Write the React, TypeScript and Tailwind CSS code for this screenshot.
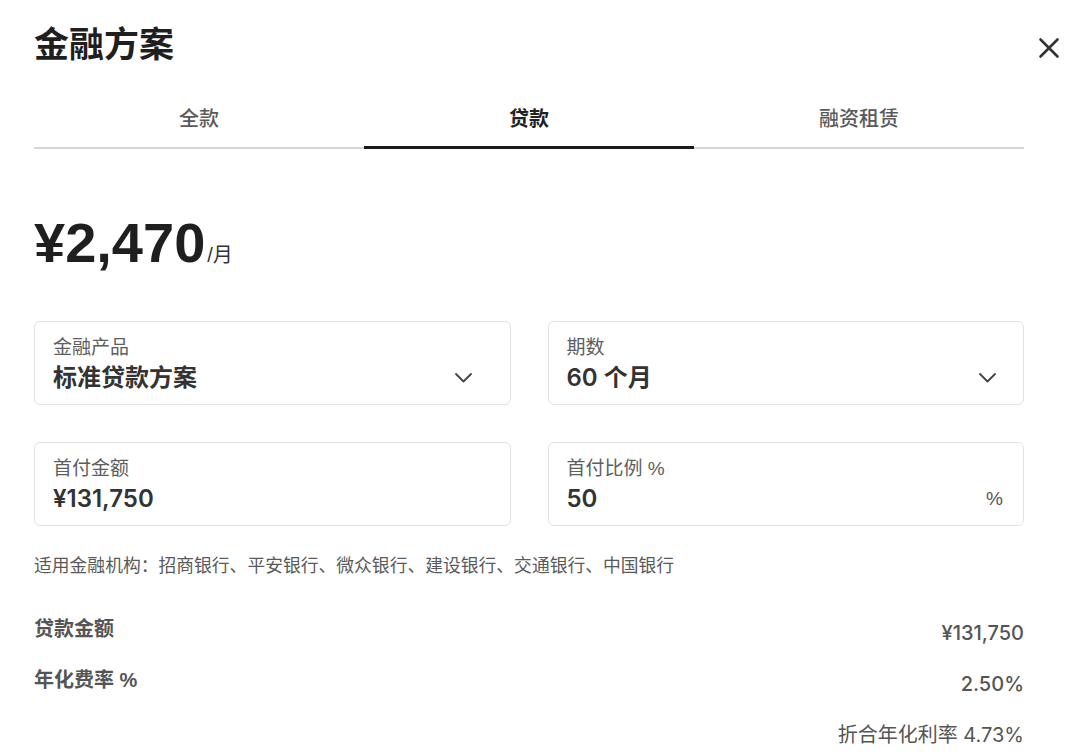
import { useState } from "react"

const tabs = ["全款", "贷款", "融资租赁"]

const num = { fontFamily: 'Inter, "Noto Sans CJK SC", sans-serif' }

function Chevron() {
  return (
    <svg width="17" height="10" viewBox="0 0 17 10" fill="none" className="shrink-0">
      <polyline points="1,1 8.5,8.5 16,1" stroke="#444" strokeWidth="1.8" strokeLinecap="round" strokeLinejoin="round" />
    </svg>
  )
}

function Field({
  label,
  value,
  right,
  pr,
}: {
  label: string
  value: string
  right?: React.ReactNode
  pr: string
}) {
  return (
    <div className={`h-[84px] rounded-[6px] border border-[#e2e2e2] pl-[18px] pt-[14px] ${pr}`}>
      <div className="text-[19px] leading-[24px] text-[#5e5e5e]">{label}</div>
      <div className="mt-[2px] flex items-center justify-between">
        <span className="text-[24px] font-semibold leading-[32px] text-[#333]" style={num}>
          {value}
        </span>
        {right}
      </div>
    </div>
  )
}

export default function App() {
  const [active, setActive] = useState(1)

  return (
    <div
      className="h-[755px] w-[1080px] overflow-hidden bg-white"
      style={{ fontFamily: '"Liberation Sans", "Noto Sans CJK SC", sans-serif' }}
    >
      <div className="flex w-[1060px] items-start justify-between pl-[34px] pt-[21px]">
        <h1 className="text-[35px] font-semibold leading-[48px] text-[#1f1f1f]">金融方案</h1>
        <button className="mt-[16px] text-[#333]" aria-label="关闭">
          <svg width="22" height="22" viewBox="0 0 22 22" fill="none">
            <path d="M2.5 2.5 L19.5 19.5 M19.5 2.5 L2.5 19.5" stroke="#333" strokeWidth="2.6" strokeLinecap="round" />
          </svg>
        </button>
      </div>

      <div className="ml-[34px] w-[990px]">
        <div className="mt-[35px] grid grid-cols-3">
          {tabs.map((t, i) => (
            <button
              key={t}
              onClick={() => setActive(i)}
              className={
                i === active
                  ? "border-b-[3px] border-[#1a1a1a] pb-[13px] pt-[1px] text-[20px] font-semibold leading-[28px] text-[#222]"
                  : "border-b-2 border-[#d6d6d6] pb-[14px] pt-[1px] text-[20px] font-medium leading-[28px] text-[#5a5a5a]"
              }
            >
              {t}
            </button>
          ))}
        </div>

        <div className="mt-[66px] flex items-baseline leading-[56px]">
          <span className="text-[56px] font-bold text-[#1f1f1f]">¥2,470</span>
          <span className="ml-[2px] text-[20px] text-[#333]">/月</span>
        </div>

        <div className="mt-[38px] grid grid-cols-2 gap-x-[37px] gap-y-[37px]">
          <Field label="金融产品" value="标准贷款方案" pr="pr-[38px]" right={<Chevron />} />
          <Field label="期数" value="60 个月" pr="pr-[27px]" right={<Chevron />} />
          <Field label="首付金额" value="¥131,750" pr="pr-[20px]" />
          <Field
            label="首付比例 %"
            value="50"
            pr="pr-[20px]"
            right={<span className="text-[19px] text-[#555]">%</span>}
          />
        </div>

        <p className="mt-[28px] text-[17.8px] leading-[24px] text-[#5a5a5a]">
          适用金融机构：招商银行、平安银行、微众银行、建设银行、交通银行、中国银行
        </p>

        <div className="mt-[37px] flex items-start justify-between">
          <span className="text-[20px] font-semibold leading-[28px] text-[#555]">贷款金额</span>
          <span className="mt-[4px] text-[20px] font-medium leading-[28px] text-[#555]" style={num}>
            ¥131,750
          </span>
        </div>
        <div className="mt-[19px] flex items-start justify-between">
          <span className="text-[20px] font-semibold leading-[28px] text-[#555]">年化费率 %</span>
          <span className="mt-[4px] text-[20px] font-medium leading-[28px] text-[#555]" style={num}>
            2.50%
          </span>
        </div>
        <div className="mt-[23px] flex justify-end">
          <span className="text-[20px] leading-[28px] text-[#555]" style={num}>
            折合年化利率 4.73%
          </span>
        </div>
      </div>
    </div>
  )
}
